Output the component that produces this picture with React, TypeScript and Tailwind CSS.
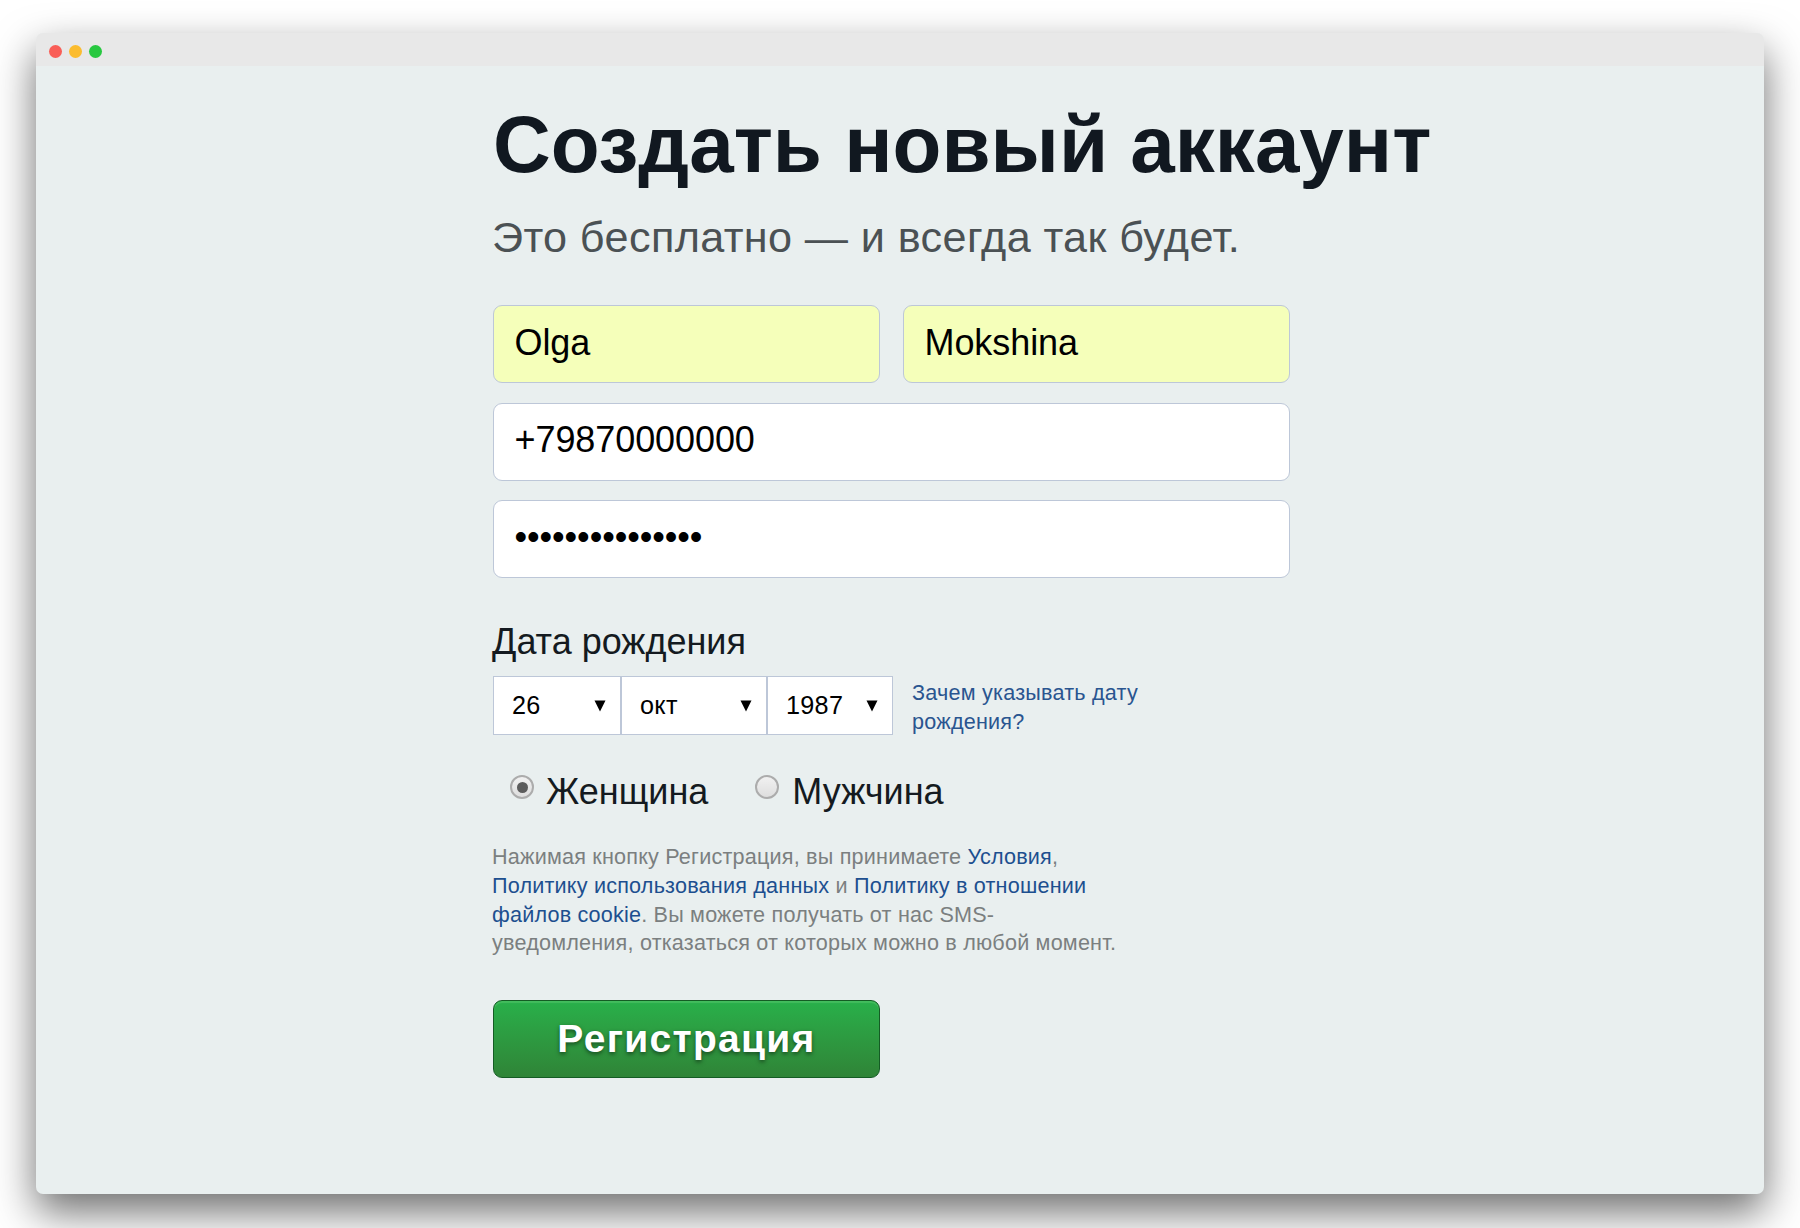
import React, { useState } from "react";

const inputClass =
  "h-[78px] rounded-[9px] border border-[#bdc7d8] px-[20.5px] text-[36px] tracking-[-0.08px] text-black outline-none";

const selects = [
  { id: "day", value: "26", className: "w-[128px]" },
  { id: "month", value: "окт", className: "w-[146px]" },
  { id: "year", value: "1987", className: "w-[126px]" },
];

function DateSelect({ value, className }: { value: string; className: string }) {
  return (
    <button
      type="button"
      className={`flex h-[59px] items-center justify-between border-[1.5px] border-[#bdc7d8] bg-white pl-[18px] pr-[14px] text-[25.2px] tracking-[0.3px] text-black ${className}`}
    >
      <span className="pt-px">{value}</span>
      <svg width="12" height="12" viewBox="0 0 12 12">
        <path d="M0.5 0.5h11L6 11.5z" fill="#000" />
      </svg>
    </button>
  );
}

function Radio({ checked }: { checked: boolean }) {
  return (
    <span className="mb-[10px] flex size-6 items-center justify-center rounded-full border-2 border-[#acacac] bg-linear-to-b from-[#f1f1f1] to-[#dedede]">
      {checked && <span className="size-[11px] rounded-full bg-[#5c5c5c]" />}
    </span>
  );
}

export default function App() {
  const [gender, setGender] = useState("female");

  return (
    <div className="h-[1228px] w-full overflow-hidden bg-white px-9 pt-[33px] font-['Liberation_Sans',Arial,sans-serif]">
      <div className="h-[1161px] overflow-hidden rounded-[7px] bg-[#e9efef] shadow-[0_18px_42px_rgba(0,0,0,0.57)]">
        {/* title bar */}
        <div className="flex h-[33px] items-center gap-[7px] bg-[#e8e8e8] pl-[13px] pt-[3px]">
          <span className="size-[13px] rounded-full bg-[#f95e57]" />
          <span className="size-[13px] rounded-full bg-[#fbbc2f]" />
          <span className="size-[13px] rounded-full bg-[#28c840]" />
        </div>

        <form className="ml-[457px] flex w-[796px] flex-col items-start whitespace-nowrap">
          <h1 className="mt-[33px] text-[80px] font-bold leading-[92px] text-[#111820]">
            Создать новый аккаунт
          </h1>
          <p className="mt-[21px] -ml-px text-[43.2px] leading-[50px] tracking-[0.38px] text-[#4b5154]">
            Это бесплатно — и всегда так будет.
          </p>

          {/* fields */}
          <div className="mt-[43px] flex flex-col gap-[19.5px]">
            <div className="flex gap-[23px]">
              <input className={`${inputClass} w-[387px] bg-[#f5ffba] pb-[2px]`} defaultValue="Olga" />
              <input className={`${inputClass} w-[387px] bg-[#f5ffba] pb-[2px]`} defaultValue="Mokshina" />
            </div>
            <input className={`${inputClass} w-full bg-white pb-1`} defaultValue="+79870000000" />
            <div className={`${inputClass} flex w-full items-center bg-white pb-1`}>•••••••••••••••</div>
          </div>

          <label className="mt-[43px] -ml-px text-[36px] leading-[42px] text-[#141a20]">
            Дата рождения
          </label>
          <div className="mt-[13px] flex">
            {selects.map((s) => (
              <DateSelect key={s.id} value={s.value} className={s.className} />
            ))}
            <a href="#" className="ml-[19px] h-[59px] pt-[3px] text-[21.6px] leading-[28.8px] tracking-[0.22px] text-[#2a5590]">
              Зачем указывать дату
              <br />
              рождения?
            </a>
          </div>

          {/* gender */}
          <div className="mt-[36px] flex gap-[47px] pl-[17px] text-[36px] leading-[42px] text-[#141a20]">
            <label className="flex items-center gap-3" onClick={() => setGender("female")}>
              <Radio checked={gender === "female"} />
              Женщина
            </label>
            <label className="flex items-center gap-[13px]" onClick={() => setGender("male")}>
              <Radio checked={gender === "male"} />
              Мужчина
            </label>
          </div>

          <p className="mt-[30px] -ml-px text-[21.6px] leading-[28.8px] tracking-[0.2px] text-[#7b7f80]">
            Нажимая кнопку Регистрация, вы принимаете <a href="#" className="text-[#1d4f8f]">Условия</a>,
            <br />
            <a href="#" className="text-[#1d4f8f]">Политику использования данных</a> и{" "}
            <a href="#" className="text-[#1d4f8f]">Политику в отношении</a>
            <br />
            <a href="#" className="text-[#1d4f8f]">файлов cookie</a>. Вы можете получать от нас SMS-
            <br />
            уведомления, отказаться от которых можно в любой момент.
          </p>

          <button
            type="button"
            className="mt-[42px] h-[78px] w-[387px] rounded-[9px] border border-[#145c24] bg-linear-to-b from-[#28b04a] to-[#2f8437] text-[39px] font-bold tracking-[1.3px] text-white shadow-[inset_0_2px_1px_rgba(130,220,140,0.3)] [text-shadow:0_2px_4px_rgba(0,0,0,0.5)]"
          >
            Регистрация
          </button>
        </form>
      </div>
    </div>
  );
}
